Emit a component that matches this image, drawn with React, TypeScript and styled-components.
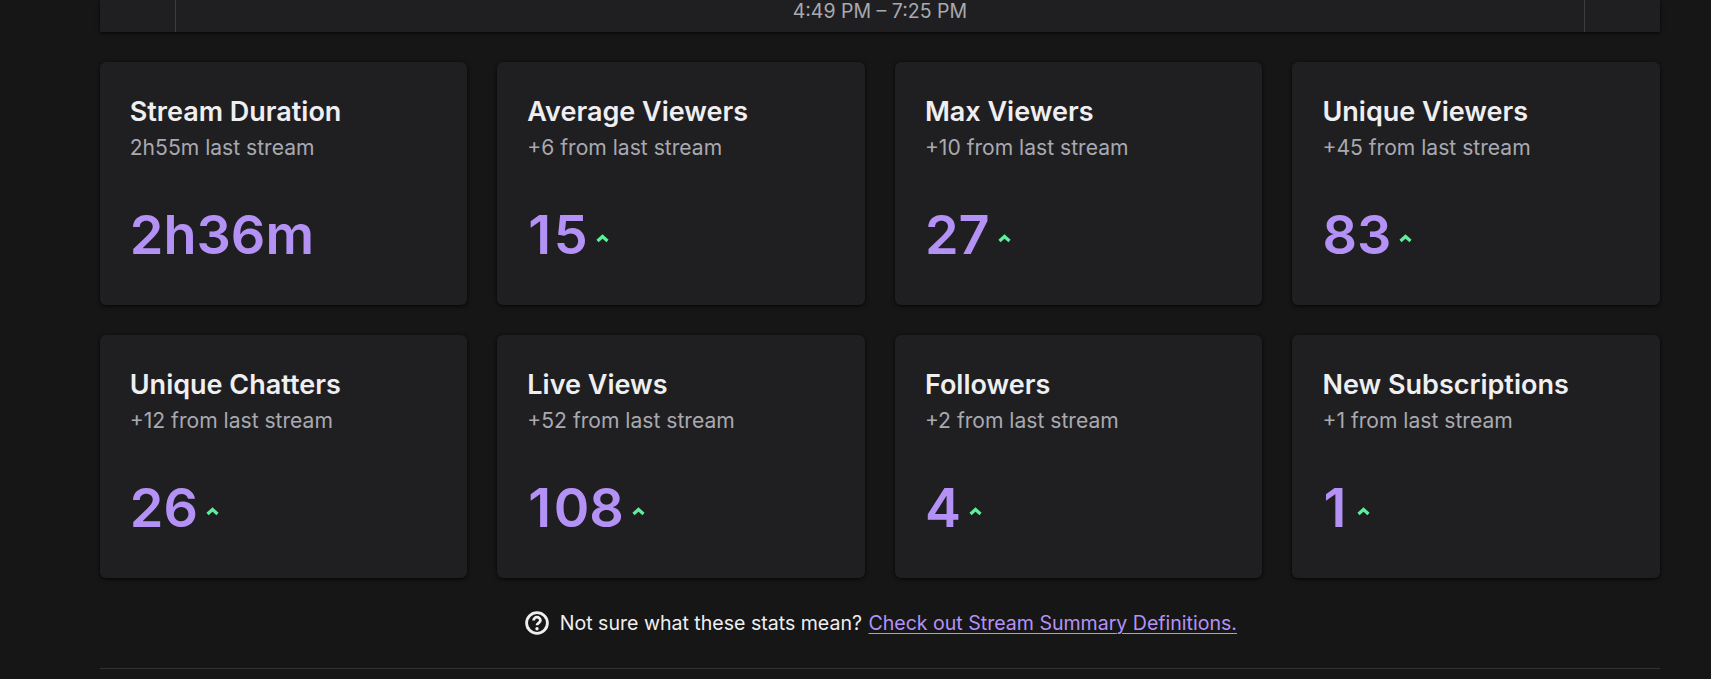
import styled, { createGlobalStyle } from "styled-components";

const GlobalStyle = createGlobalStyle`
  html, body {
    margin: 0;
    background-color: #161616;
    font-family: Inter, "Liberation Sans", sans-serif;
  }
`;

const Page = styled.div`
  width: 1711px;
  height: 679px;
  box-sizing: border-box;
  padding: 0 51px 0 99.75px;
  overflow: hidden;
`;

const TimelinePanel = styled.div`
  height: 32px;
  display: grid;
  grid-template-columns: 75px 1fr 75px;
  background-color: #1f1f22;
  box-shadow: 0 1px 4px rgba(0, 0, 0, 0.8);
`;

const TimelineRange = styled.div`
  grid-column: 2;
  border-left: 1px solid #3d3d40;
  border-right: 1px solid #3d3d40;
  color: #a9a9b0;
  font-size: 19.5px;
  line-height: 22px;
  text-align: center;
`;

const StatsGrid = styled.div`
  display: grid;
  grid-template-columns: repeat(4, 1fr);
  gap: 30px;
  margin-top: 30px;
`;

const StatCard = styled.div`
  height: 243px;
  box-sizing: border-box;
  padding: 31px 30px 30px;
  background-color: #1f1f22;
  border-radius: 6px;
  box-shadow: 0 1px 4px rgba(0, 0, 0, 0.8);
`;

const StatTitle = styled.div`
  color: #efeff1;
  font-size: 27px;
  font-weight: 600;
  line-height: 38px;
`;

const StatChange = styled.div`
  color: #a9a9b0;
  font-size: 21.1px;
  line-height: 28px;
  margin-top: 3px;
`;

const StatValueRow = styled.div`
  display: flex;
  align-items: center;
  gap: 8px;
  margin-top: 40px;
`;

const StatValue = styled.div`
  color: #b492f5;
  font-size: 54px;
  font-weight: 600;
  line-height: 66px;
`;

// the digit 1 sits wider in the original's numerals
const WideOne = styled.span`
  margin-left: 1px;
  letter-spacing: 2.5px;
`;

const TrendArrow = styled.svg`
  width: 13px;
  height: 9px;
  margin-top: 6px;
  fill: none;
  stroke: #5cf09a;
  stroke-width: 3.2;
`;

const HelpRow = styled.div`
  display: flex;
  align-items: center;
  justify-content: center;
  gap: 11px;
  margin-top: 33px;
  padding-left: 2px;
  height: 24px;
  color: #efeff1;
  font-size: 19.56px;
`;

const HelpIcon = styled.svg`
  width: 24px;
  height: 24px;
`;

const HelpLink = styled.a`
  margin-left: 1px;
  color: #b492f5;
  text-decoration: underline;
  text-underline-offset: 3px;
  text-decoration-thickness: 1px;
`;

const Divider = styled.div`
  margin-top: 33px;
  height: 1px;
  background-color: #323235;
`;

const stats = [
  { title: "Stream Duration", change: "2h55m last stream", value: "2h36m", up: false },
  { title: "Average Viewers", change: "+6 from last stream", value: "15", up: true },
  { title: "Max Viewers", change: "+10 from last stream", value: "27", up: true },
  { title: "Unique Viewers", change: "+45 from last stream", value: "83", up: true },
  { title: "Unique Chatters", change: "+12 from last stream", value: "26", up: true },
  { title: "Live Views", change: "+52 from last stream", value: "108", up: true },
  { title: "Followers", change: "+2 from last stream", value: "4", up: true },
  { title: "New Subscriptions", change: "+1 from last stream", value: "1", up: true },
];

const renderValue = (value: string) =>
  value.split("").map((char, i) =>
    char === "1" ? <WideOne key={i}>{char}</WideOne> : char
  );

const App = () => (
  <Page>
    <GlobalStyle />
    <TimelinePanel>
      <TimelineRange>4:49 PM – 7:25 PM</TimelineRange>
    </TimelinePanel>
    <StatsGrid>
      {stats.map((stat) => (
        <StatCard key={stat.title}>
          <StatTitle>{stat.title}</StatTitle>
          <StatChange>{stat.change}</StatChange>
          <StatValueRow>
            <StatValue>{renderValue(stat.value)}</StatValue>
            {stat.up && (
              <TrendArrow viewBox="0 0 13 9">
                <path d="M1.5 7 L6.5 2.5 L11.5 7" />
              </TrendArrow>
            )}
          </StatValueRow>
        </StatCard>
      ))}
    </StatsGrid>
    <HelpRow>
      <HelpIcon viewBox="0 0 24 24">
        <circle cx="12" cy="12" r="10.4" fill="none" stroke="#efeff1" strokeWidth="2.8" />
        <path
          d="M8.6 9.6a3.4 3.4 0 0 1 6.8 0c0 2.1-3.4 2.3-3.4 4.6"
          fill="none"
          stroke="#efeff1"
          strokeWidth="2.8"
        />
        <circle cx="12" cy="17.8" r="1.7" fill="#efeff1" />
      </HelpIcon>
      <span>
        Not sure what these stats mean?{" "}
        <HelpLink href="#">Check out Stream Summary Definitions.</HelpLink>
      </span>
    </HelpRow>
    <Divider />
  </Page>
);

export default App;
